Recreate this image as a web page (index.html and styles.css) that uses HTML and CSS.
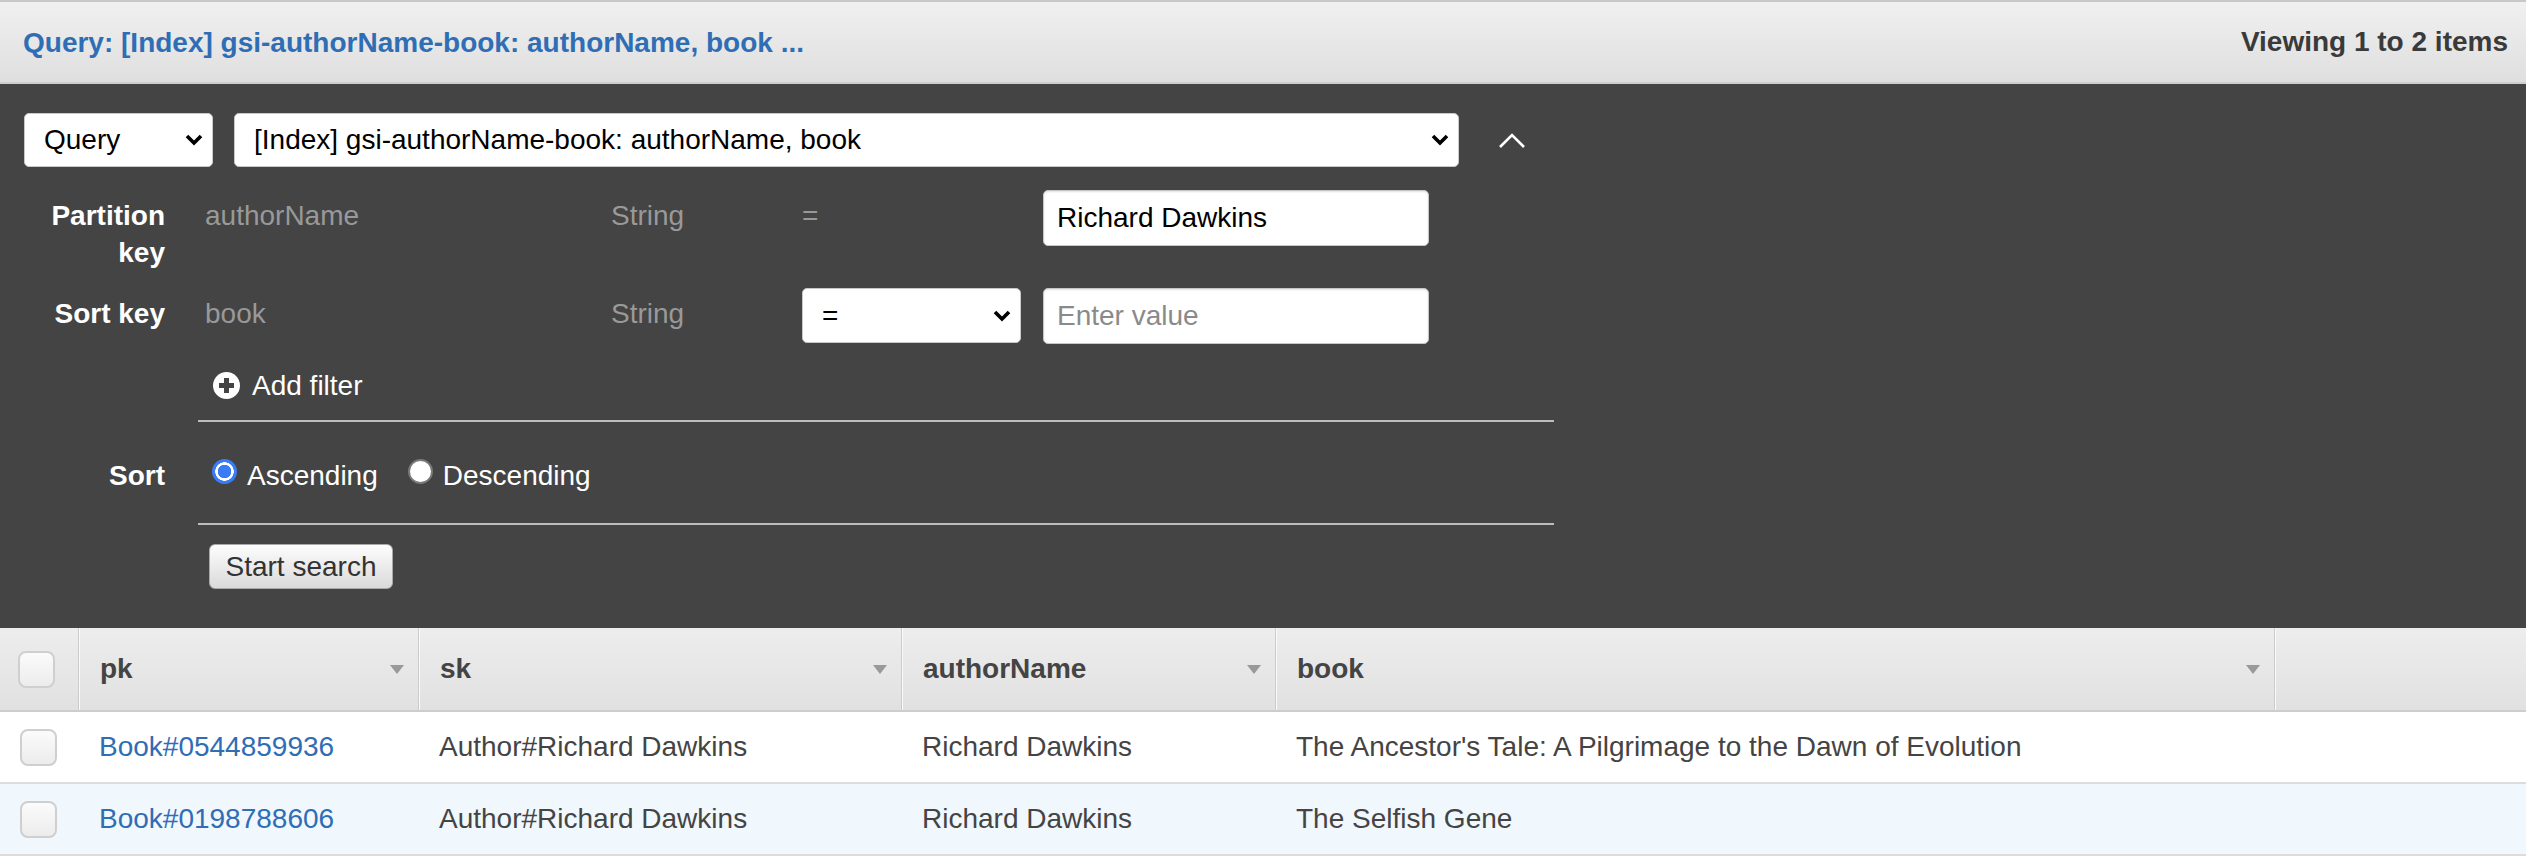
FILE: index.html
```html
<!DOCTYPE html>
<html lang="en">
<head>
<meta charset="utf-8">
<title>Query</title>
<link rel="stylesheet" href="styles.css">
</head>
<body>
<header class="topbar">
  <div class="title">Query: [Index] gsi-authorName-book: authorName, book ...</div>
  <div class="count">Viewing 1 to 2 items</div>
</header>

<section class="panel">
  <div class="toprow">
    <div class="select sel-mode">
      <span>Query</span>
      <svg class="chev" width="18" height="12" viewBox="0 0 18 12"><polyline points="2,2 9,9 16,2" fill="none" stroke="#000" stroke-width="3.6"/></svg>
    </div>
    <div class="select sel-index">
      <span>[Index] gsi-authorName-book: authorName, book</span>
      <svg class="chev" width="18" height="12" viewBox="0 0 18 12"><polyline points="2,2 9,9 16,2" fill="none" stroke="#000" stroke-width="3.6"/></svg>
    </div>
    <button class="collapse" type="button" aria-label="Collapse">
      <svg width="28" height="18" viewBox="0 0 28 18"><polyline points="2,16 14,4 26,16" fill="none" stroke="#fff" stroke-width="2.6"/></svg>
    </button>
  </div>

  <div class="form">
    <div class="frow key-row">
      <div class="flabel">Partition key</div>
      <div class="fcontent keygrid">
        <div class="ftext attr">authorName</div>
        <div class="ftext">String</div>
        <div class="ftext">=</div>
        <input class="finput" type="text" value="Richard Dawkins">
      </div>
    </div>
    <div class="frow key-row">
      <div class="flabel">Sort key</div>
      <div class="fcontent keygrid">
        <div class="ftext attr">book</div>
        <div class="ftext">String</div>
        <div class="select sel-op">
          <span>=</span>
          <svg class="chev" width="18" height="12" viewBox="0 0 18 12"><polyline points="2,2 9,9 16,2" fill="none" stroke="#000" stroke-width="3.6"/></svg>
        </div>
        <input class="finput" type="text" placeholder="Enter value">
      </div>
    </div>
    <div class="frow indent addrow">
      <div class="addfilter">
        <svg width="27" height="27" viewBox="0 0 27 27"><circle cx="13.5" cy="13.5" r="13.5" fill="#fff"/><rect x="6" y="11" width="15" height="5" fill="#444"/><rect x="11" y="6" width="5" height="15" fill="#444"/></svg>
        <span>Add filter</span>
      </div>
    </div>
    <div class="divider first"></div>
    <div class="frow sort-row">
      <div class="flabel plain">Sort</div>
      <div class="fcontent radios">
        <label class="radio"><span class="dot checked"></span><span>Ascending</span></label>
        <label class="radio"><span class="dot"></span><span>Descending</span></label>
      </div>
    </div>
    <div class="divider second"></div>
    <div class="frow indent btnrow">
      <button class="btn" type="button">Start search</button>
    </div>
  </div>
</section>

<div class="table">
  <div class="trow thead">
    <div class="th thcb"><span class="cb"></span></div>
    <div class="th"><span>pk</span><span class="tri"></span></div>
    <div class="th"><span>sk</span><span class="tri"></span></div>
    <div class="th"><span>authorName</span><span class="tri"></span></div>
    <div class="th"><span>book</span><span class="tri"></span></div>
    <div class="th last"></div>
  </div>
  <div class="trow">
    <div class="td tdcb"><span class="cb"></span></div>
    <div class="td"><a class="link" href="#">Book#0544859936</a></div>
    <div class="td">Author#Richard Dawkins</div>
    <div class="td">Richard Dawkins</div>
    <div class="td">The Ancestor's Tale: A Pilgrimage to the Dawn of Evolution</div>
    <div class="td"></div>
  </div>
  <div class="trow alt">
    <div class="td tdcb"><span class="cb"></span></div>
    <div class="td"><a class="link" href="#">Book#0198788606</a></div>
    <div class="td">Author#Richard Dawkins</div>
    <div class="td">Richard Dawkins</div>
    <div class="td">The Selfish Gene</div>
    <div class="td"></div>
  </div>
</div>
</body>
</html>
```

FILE: styles.css
```css
* { box-sizing: border-box; }

body {
  margin: 0;
  font-family: "Liberation Sans", Arial, Helvetica, sans-serif;
  font-size: 28px;
  background: #fff;
  color: #444;
}

/* top bar */
.topbar {
  height: 84px;
  border-top: 2px solid #c8c8c8;
  border-bottom: 2px solid #cecece;
  background: linear-gradient(#f0f0f0, #dfdfdf);
  display: flex;
  align-items: center;
  justify-content: space-between;
  padding: 2px 18px 0 23px;
}
.title { color: #2f6eb5; font-weight: bold; }
.count { color: #3a3a3a; font-weight: bold; padding-bottom: 2px; }

/* dark query panel */
.panel {
  background: #444;
  padding: 29px 0 39px;
}
.toprow {
  display: flex;
  align-items: center;
  padding-left: 24px;
}
.select {
  display: flex;
  align-items: center;
  justify-content: space-between;
  height: 54px;
  background: #fff;
  border: 1px solid #c9c9c9;
  border-radius: 5px;
  padding: 0 9px 0 19px;
  color: #000;
}
.chev { flex: none; }
.sel-mode { width: 189px; }
.sel-index { width: 1225px; margin-left: 21px; }
.sel-op { width: 219px; height: 55px; }
.collapse {
  margin-left: 39px;
  background: none;
  border: 0;
  padding: 0;
  display: flex;
}

.form { margin-top: 23px; }
.frow { display: flex; }
.flabel {
  width: 165px;
  padding-left: 40px;
  padding-top: 7px;
  text-align: right;
  color: #fff;
  font-weight: bold;
  line-height: 37px;
}
.flabel.plain { padding-top: 0; }
.fcontent { margin-left: 33px; }
.keygrid {
  display: grid;
  grid-template-columns: 413px 191px 241px 386px;
  align-items: start;
}
.key-row + .key-row { margin-top: 17px; }
.ftext {
  color: #999;
  line-height: 37px;
  padding-top: 7px;
}
.ftext.attr { padding-left: 7px; }
.finput {
  width: 386px;
  height: 56px;
  border: 1px solid #c6c6c6;
  border-radius: 5px;
  background: #fff;
  box-shadow: inset 0 1px 2px rgba(0,0,0,0.12);
  padding: 0 13px;
  font-family: inherit;
  font-size: 28px;
  color: #000;
  outline: none;
}
.finput::placeholder { color: #8a8a8a; }

.indent { padding-left: 198px; }
.addrow { margin-top: 23px; }
.addfilter {
  display: flex;
  align-items: center;
  gap: 12px;
  padding-left: 15px;
  color: #fff;
  line-height: 37px;
}

.divider {
  margin-left: 198px;
  width: 1356px;
  height: 2px;
  background: #bdbdbd;
}
.divider.first { margin-top: 16px; }
.divider.second { margin-top: 29px; }

.sort-row { margin-top: 35px; line-height: 37px; }
.radios {
  display: flex;
  align-items: center;
  padding-left: 14px;
  color: #fff;
}
.radio {
  display: flex;
  align-items: center;
  gap: 10px;
  margin-right: 30px;
}
.dot {
  width: 25px;
  height: 25px;
  border-radius: 50%;
  background: #fff;
  border: 2px solid #7a7a7a;
  margin-bottom: 8px;
}
.dot.checked {
  border: 0;
  background: radial-gradient(circle, #3a7cf4 0 6.5px, #fff 7px 9px, #3a7cf4 9.5px);
}

.btnrow { margin-top: 19px; }
.btn {
  margin-left: 11px;
  width: 184px;
  height: 45px;
  border: 1px solid #a9a9a9;
  border-radius: 6px;
  background: linear-gradient(#fdfdfd, #dadada);
  font-family: inherit;
  font-size: 28px;
  color: #333;
  padding: 0;
}

/* results table */
.trow {
  display: grid;
  grid-template-columns: 79px 340px 483px 374px 999px 1fr;
  height: 72px;
  border-bottom: 2px solid #dcdcdc;
}
.trow.alt { background: #f0f7fd; }
.thead {
  height: 84px;
  background: linear-gradient(#ededed, #e1e1e1);
  border-bottom: 2px solid #cdcdcd;
}
.th {
  display: flex;
  align-items: center;
  justify-content: space-between;
  padding: 0 14px 0 21px;
  font-weight: bold;
  color: #444;
  border-right: 1px solid #cbcbcb;
  box-shadow: 1px 0 0 #fafafa;
}
.th.last { border-right: 0; box-shadow: none; }
.thcb, .tdcb { padding-left: 18px; }
.tri {
  width: 0;
  height: 0;
  border-left: 7px solid transparent;
  border-right: 7px solid transparent;
  border-top: 9px solid #999;
}
.td {
  display: flex;
  align-items: center;
  padding-left: 20px;
  color: #444;
  white-space: nowrap;
}
.link { color: #2f6db5; text-decoration: none; }
.cb {
  display: block;
  width: 37px;
  height: 37px;
  border: 2px solid #cfcfcf;
  border-radius: 8px;
  background: linear-gradient(#fbfbfb, #ececec);
}
```
